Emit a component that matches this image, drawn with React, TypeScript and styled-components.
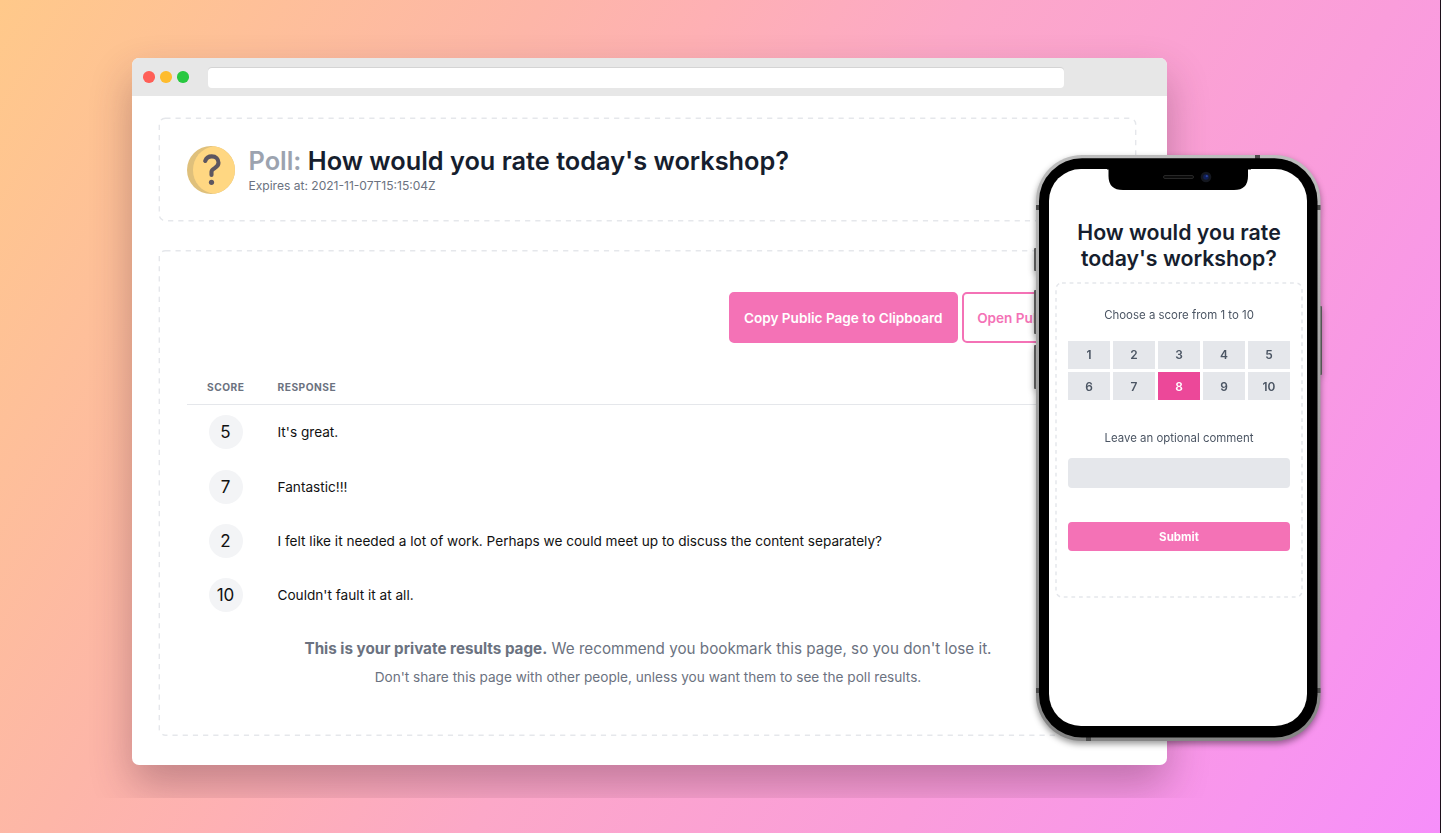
import React from 'react';
import styled, { createGlobalStyle } from 'styled-components';

const Global = createGlobalStyle`
  * { box-sizing: border-box; }
  body { margin: 0; font-family: Inter, "Liberation Sans", sans-serif; color: #161e2e; overflow: hidden; }
  h1, h2, p { margin: 0; }
  button { font-family: inherit; }
`;

const Stage = styled.main`
  position: relative;
  width: 1441px;
  height: 833px;
  border-right: 1px solid #1c0f1a;
  background: linear-gradient(121deg, #ffc98a 0%, #fdb6a8 28%, #feb0b4 37%, #fca8c8 50%, #fa9ddb 72%, #f895ee 89%, #f68efa 100%);
`;

const ShadowArea = styled.div`
  width: 1270px;
  height: 798px;
  padding: 58px 0 0 132px;
  overflow: hidden;
`;

const Browser = styled.section`
  width: 1035px;
  height: 707px;
  border-radius: 7px;
  background: #fff;
  box-shadow: 0 20px 42px rgba(70, 30, 50, 0.32);
`;

const TitleBar = styled.header`
  display: flex;
  align-items: center;
  height: 38px;
  padding-left: 11px;
  border-radius: 7px 7px 0 0;
  background: #e7e7e7;
`;

const Light = styled.span<{ $color: string }>`
  width: 11.5px;
  height: 11.5px;
  margin-right: 5.6px;
  border-radius: 50%;
  background: ${(p) => p.$color};
`;

const Address = styled.div`
  width: 856px;
  height: 20px;
  margin: 1px 0 0 14px;
  border-radius: 4px;
  background: #fff;
  box-shadow: 0 -1px 0 #d4d4d4;
`;

const Page = styled.div`
  display: flex;
  flex-direction: column;
  gap: 28px;
  padding: 21px 29px 0 26px;
`;

const Dashed = styled.div<{ $h: number }>`
  position: relative;
  height: ${(p) => p.$h}px;
`;

const Outline = styled.svg`
  position: absolute;
  inset: 0;
  width: 100%;
  height: 100%;
  pointer-events: none;
  fill: none;
  stroke: #e5e7eb;
`;

const PollHead = styled.div`
  display: flex;
  gap: 13.5px;
  padding: 28px 0 0 29px;
`;

const Title = styled.h1`
  font-size: 25.33px;
  line-height: 32px;
  font-weight: 600;
  white-space: nowrap;
  span { color: #9ca3af; }
`;

const Expires = styled.p`
  margin-top: 1px;
  font-size: 12.05px;
  line-height: 15px;
  color: #6b7280;
`;

const Actions = styled.div`
  display: flex;
  gap: 4px;
  padding: 42px 0 0 570.5px;
`;

const ActionButton = styled.button<{ $outline?: boolean }>`
  flex: none;
  width: ${(p) => (p.$outline ? 146 : 229.5)}px;
  height: 51px;
  padding: 0;
  border: 2px solid #f472b6;
  border-radius: 5px;
  background: ${(p) => (p.$outline ? '#fff' : '#f472b6')};
  color: ${(p) => (p.$outline ? '#f472b6' : '#fff')};
  font-size: 13.6px;
  font-weight: 600;
  white-space: nowrap;
`;

const Table = styled.div`
  margin: 28px 28px 0 29px;
`;

const HeadRow = styled.div`
  display: grid;
  grid-template-columns: 77.5px 1fr;
  align-items: center;
  height: 34px;
  border-bottom: 1px solid #e5e7eb;
  color: #6b7280;
  font-size: 10.2px;
  font-weight: 700;
  letter-spacing: 0.51px;
`;

const HeadCell = styled.span<{ $left: number }>`
  padding: 0 0 1px ${(p) => p.$left}px;
`;

const Row = styled.div`
  display: grid;
  grid-template-columns: 77.5px 1fr;
  align-items: center;
  height: 54.4px;
  font-size: 13.62px;
  color: #111;
  p { padding-left: 13px; }
`;

const Score = styled.span`
  display: flex;
  align-items: center;
  justify-content: center;
  width: 34px;
  height: 34px;
  margin-left: 21.5px;
  border-radius: 50%;
  background: #f3f4f6;
  font-size: 17px;
`;

const Notice = styled.div`
  padding-top: 12px;
  text-align: center;
  color: #6b7280;
  p { font-size: 15.22px; line-height: 28px; }
  p + p { font-size: 13.62px; line-height: 28px; }
`;

const Phone = styled.aside`
  position: absolute;
  left: 1036px;
  top: 155px;
  width: 284px;
  height: 586px;
  padding: 14px 13px 15px 13px;
  filter: drop-shadow(0 3px 3px rgba(0, 0, 0, 0.4));
`;

const Shell = styled.svg`
  position: absolute;
  left: -3px;
  top: 0;
`;

const Screen = styled.div`
  position: relative;
  width: 258px;
  height: 557px;
  padding: 50px 4px 0 6px;
  border-radius: 32px;
  background: #fff;
`;

const PhoneTitle = styled.h2`
  font-size: 21.3px;
  line-height: 26px;
  font-weight: 600;
  text-align: center;
`;

const Form = styled.div`
  position: relative;
  height: 316px;
  margin-top: 11px;
  padding: 25px 13px 0 13px;
`;

const Label = styled.p`
  font-size: 11.45px;
  line-height: 16px;
  text-align: center;
  color: #4b5563;
`;

const Scores = styled.div`
  display: grid;
  grid-template-columns: repeat(5, 42px);
  gap: 3px;
  margin: 17.7px 0 29.8px;
`;

const ScoreButton = styled.button<{ $on: boolean }>`
  height: 28.4px;
  padding: 0;
  border: 0;
  background: ${(p) => (p.$on ? '#ec4899' : '#e5e7eb')};
  color: ${(p) => (p.$on ? '#fff' : '#4b5563')};
  font-size: 11.9px;
  font-weight: 600;
`;

const Comment = styled.div`
  height: 30px;
  margin: 12px 0 34px;
  border-radius: 4px;
  background: #e5e7eb;
`;

const Submit = styled.button`
  display: block;
  width: 100%;
  height: 28.5px;
  padding: 0;
  border: 0;
  border-radius: 4px;
  background: #f472b6;
  color: #fff;
  font-size: 11.5px;
  font-weight: 700;
`;

const Coin = styled.svg`
  flex: none;
  margin-top: 0.6px;
`;

const QuestionCoin = () => (
  <Coin width="48" height="48" viewBox="0 0 48 48">
    <circle cx="24" cy="24" r="24" fill="#dfc07b" />
    <path d="M27 .2a24 24 0 0 1 0 47.6C14 46 6 36 6 24S14 2 27 .2Z" fill="#ffd782" />
    <path d="M18.2 15C19.3 12 21.5 10.4 24.8 10.4c4 0 6.7 2.9 6.7 6.4 0 5.6-7 5-7 9V29" fill="none" stroke="#5d5660" strokeWidth="4.1" strokeLinecap="round" strokeLinejoin="round" />
    <circle cx="24.5" cy="36.3" r="2.6" fill="#5d5660" />
  </Coin>
);

const PhoneShell = () => (
  <Shell width="290" height="588" viewBox="0 0 290 588">
    <defs>
      <linearGradient id="metal" x2="0" y2="1">
        <stop stopColor="#bdbdbd" />
        <stop offset=".35" stopColor="#a3a3a3" />
        <stop offset="1" stopColor="#858585" />
      </linearGradient>
    </defs>
    <g fill="#555">
      <rect x="1" y="93" width="3" height="23" rx="1" />
      <rect x="1" y="135" width="3" height="44" rx="1" />
      <rect x="1" y="190" width="3" height="44" rx="1" />
      <rect x="286" y="151" width="3" height="69" rx="1" />
    </g>
    <rect x="3" y="0" width="284.5" height="586" rx="46" fill="url(#metal)" />
    <g fill="#4b4b4b">
      <rect x="222" width="5" height="4" />
      <rect x="53" y="582" width="5" height="4" />
      <rect x="3" y="50" width="4" height="5" />
      <rect x="283.5" y="50" width="4" height="5" />
      <rect x="3" y="533" width="4" height="5" />
      <rect x="283.5" y="533" width="4" height="5" />
    </g>
    <rect x="6" y="3.3" width="278.5" height="579.2" rx="43" fill="#000" />
  </Shell>
);

const Notch = styled.svg`
  position: absolute;
  left: 58px;
  top: -1px;
`;

const responses = [
  ['5', "It's great."],
  ['7', 'Fantastic!!!'],
  ['2', 'I felt like it needed a lot of work. Perhaps we could meet up to discuss the content separately?'],
  ['10', "Couldn't fault it at all."],
];

export default function App() {
  return (
    <Stage>
      <Global />
      <ShadowArea>
        <Browser>
          <TitleBar>
            <Light $color="#ff5f57" />
            <Light $color="#febc2e" />
            <Light $color="#28c840" />
            <Address />
          </TitleBar>
          <Page>
            <Dashed $h={105}>
              <Outline>
                <rect x="1.3" y="1.2" width="976.4" height="102.6" rx="6" strokeWidth="1.4" strokeDasharray="5.2 5" />
              </Outline>
              <PollHead>
                <QuestionCoin />
                <div>
                  <Title><span>Poll:</span> How would you rate today's workshop?</Title>
                  <Expires>Expires at: 2021-11-07T15:15:04Z</Expires>
                </div>
              </PollHead>
            </Dashed>
            <Dashed $h={486}>
              <Outline>
                <rect x="1.3" y=".8" width="976.4" height="484.4" rx="6" strokeWidth="1.4" strokeDasharray="5.2 5" />
              </Outline>
              <Actions>
                <ActionButton>Copy Public Page to Clipboard</ActionButton>
                <ActionButton $outline>Open Public Page</ActionButton>
              </Actions>
              <Table>
                <HeadRow>
                  <HeadCell $left={20}>SCORE</HeadCell>
                  <HeadCell $left={13}>RESPONSE</HeadCell>
                </HeadRow>
                {responses.map(([score, text]) => (
                  <Row key={score}>
                    <Score>{score}</Score>
                    <p>{text}</p>
                  </Row>
                ))}
              </Table>
              <Notice>
                <p><b>This is your private results page.</b> We recommend you bookmark this page, so you don't lose it.</p>
                <p>Don't share this page with other people, unless you want them to see the poll results.</p>
              </Notice>
            </Dashed>
          </Page>
        </Browser>
      </ShadowArea>
      <Phone>
        <PhoneShell />
        <Screen>
          <Notch width="144" height="24" viewBox="0 0 144 24">
            <path d="M0 0h144v1.5H141V8q0 14-14 14H16Q1.5 22 1.5 8V1.5H0Z" fill="#000" />
            <rect x="56.5" y="7.5" width="30" height="3" rx="1.5" fill="#0b0b0b" stroke="#303030" strokeWidth=".8" />
            <circle cx="99" cy="9" r="5.3" fill="#14171f" />
            <circle cx="99" cy="9" r="2.8" fill="#101f55" />
            <circle cx="99.8" cy="8.2" r="1.1" fill="#2b43a0" />
          </Notch>
          <PhoneTitle>How would you rate<br />today's workshop?</PhoneTitle>
          <Form>
            <Outline>
              <rect x="1" y="1" width="246" height="314" rx="6" strokeWidth="1.5" strokeDasharray="3.8 3.8" />
            </Outline>
            <Label>Choose a score from 1 to 10</Label>
            <Scores>
              {[1, 2, 3, 4, 5, 6, 7, 8, 9, 10].map((n) => (
                <ScoreButton key={n} $on={n === 8}>{n}</ScoreButton>
              ))}
            </Scores>
            <Label>Leave an optional comment</Label>
            <Comment />
            <Submit>Submit</Submit>
          </Form>
        </Screen>
      </Phone>
    </Stage>
  );
}
